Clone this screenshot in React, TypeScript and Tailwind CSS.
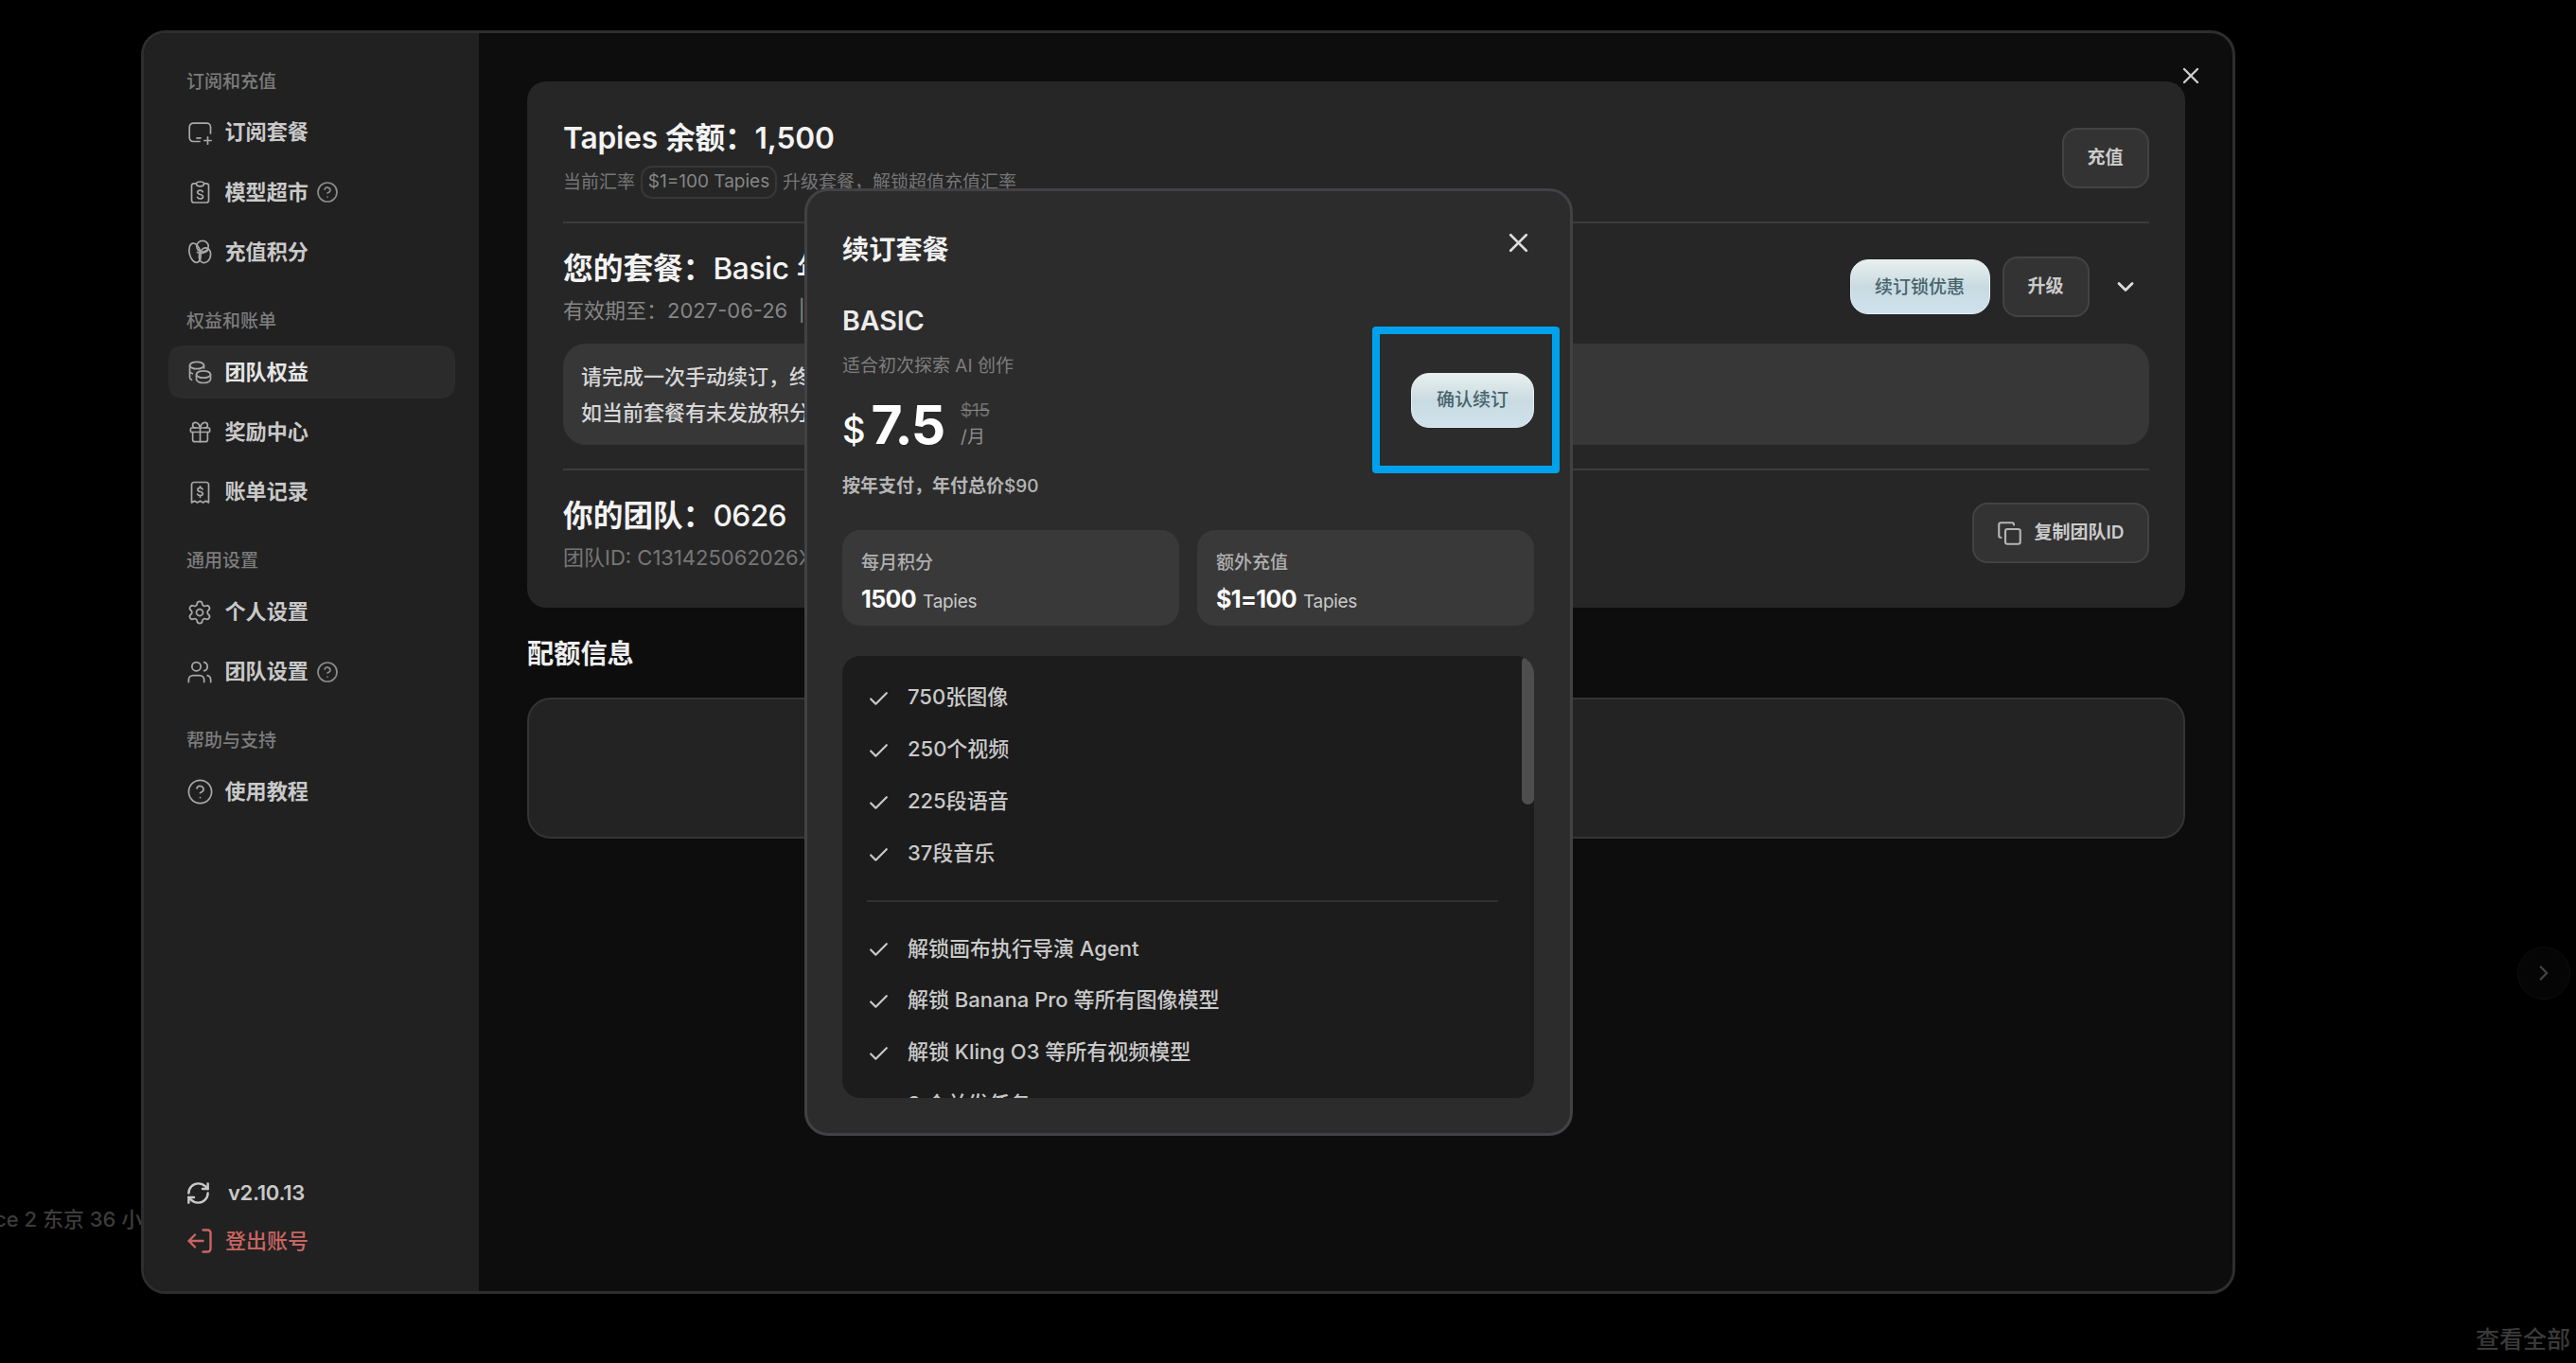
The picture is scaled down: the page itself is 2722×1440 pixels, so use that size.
import type { ReactNode } from "react";
import {
  Check,
  ChevronDown,
  ChevronRight,
  CircleQuestionMark,
  Copy,
  Gift,
  RefreshCw,
  Settings,
  Users,
  X,
} from "lucide-react";

const Svg = (props: { children: ReactNode }) => (
  <svg
    width="25"
    height="25"
    viewBox="0 0 25 25"
    fill="none"
    stroke="currentColor"
    strokeWidth="1.7"
    strokeLinecap="round"
    strokeLinejoin="round"
    className="shrink-0 overflow-visible"
  >
    {props.children}
  </svg>
);

const PlanIcon = () => (
  <Svg>
    <path d="M12 21.5H5.2a4 4 0 0 1-4-4V6.2a4 4 0 0 1 4-4h14.3a4 4 0 0 1 4 4v6.8" />
    <path d="M9 17.8h4M20.5 16.8v7.4M16.8 20.5h7.4" />
  </Svg>
);

const MarketIcon = () => (
  <Svg>
    <path d="M8 2.8H6a2.5 2.5 0 0 0-2.5 2.5v15.2A2.5 2.5 0 0 0 6 23h13a2.5 2.5 0 0 0 2.5-2.5V5.3A2.5 2.5 0 0 0 19 2.8h-2" />
    <path d="M12.5 1c2 0 4 .8 4 2.3S14.5 5.8 12.5 5.8s-4-1-4-2.5S10.5 1 12.5 1Z" />
    <path d="M15.3 11.6c-.4-1-1.5-1.5-2.8-1.5-1.6 0-2.8.8-2.8 2.2 0 3 5.8 1.4 5.8 4.4 0 1.5-1.3 2.3-3 2.3-1.5 0-2.6-.6-3-1.7" />
  </Svg>
);

const CreditIcon = () => (
  <Svg>
    <ellipse cx="7" cy="13.2" rx="5.8" ry="10.4" transform="rotate(-14 7 13.2)" />
    <ellipse cx="15" cy="6.2" rx="6.2" ry="5.8" />
    <ellipse cx="17.5" cy="15.8" rx="6" ry="8" transform="rotate(16 17.5 15.8)" />
    <path d="M9.5 12.5c3 1.800 7.500 1.200 11-2" />
  </Svg>
);

const BenefitIcon = () => (
  <Svg>
    <ellipse cx="9" cy="5" rx="7.5" ry="3.7" />
    <path d="M1.5 5v13c0 1 .8 1.8 2 2.3M1.5 11.5c.4 1 1.5 1.7 3 2.2M16.5 5v3" />
    <ellipse cx="16" cy="14.5" rx="7.5" ry="3.7" />
    <path d="M8.5 14.5v5.3c0 2 3.4 3.7 7.5 3.7s7.5-1.7 7.5-3.7v-5.3" />
  </Svg>
);

const BillIcon = () => (
  <Svg>
    <path d="M3.5 23V4A2.5 2.5 0 0 1 6 1.5h13A2.5 2.5 0 0 1 21.5 4v19l-3-1.8-3 1.8-3-1.8-3 1.8-3-1.8Z" />
    <path d="M15 8.8c-.4-.9-1.3-1.4-2.5-1.4-1.5 0-2.6.8-2.6 2 0 2.8 5.4 1.4 5.4 4.2 0 1.3-1.2 2.1-2.8 2.1-1.4 0-2.4-.6-2.8-1.6M12.5 5.8v1.6M12.5 15.7v1.6" />
  </Svg>
);

const LogoutIcon = () => (
  <svg
    width="26"
    height="26"
    viewBox="0 0 26 26"
    fill="none"
    stroke="currentColor"
    strokeWidth="2.4"
    strokeLinecap="round"
    strokeLinejoin="round"
  >
    <path d="M16.5 1.5h5a3 3 0 0 1 3 3v17a3 3 0 0 1-3 3h-5M16.5 13H1.5M8 6.5 1.5 13 8 19.5" />
  </svg>
);

const NavTitle = (props: { className?: string; children: ReactNode }) => (
  <div
    className={`flex h-[20px] items-center pl-[19.5px] text-[19px] font-medium text-[#7c7c7c] ${props.className ?? ""}`}
  >
    {props.children}
  </div>
);

const NavItem = (props: { icon: ReactNode; label: string; active?: boolean; help?: boolean }) => (
  <div
    className={`flex h-[56px] items-center rounded-[14px] pl-[21px] ${
      props.active ? "bg-[#2b2b2b] text-[#e6e6e6]" : "text-[#c9c9c9]"
    }`}
  >
    <span className="flex w-[39px] text-[#a9a9a9]">{props.icon}</span>
    <span className="text-[22.1px] font-semibold">{props.label}</span>
    {props.help && (
      <CircleQuestionMark size={24} strokeWidth={1.7} className="ml-[8px] text-[#8c8c8c]" />
    )}
  </div>
);

const Sidebar = () => (
  <aside className="flex w-[354px] shrink-0 flex-col bg-[#212121] pr-[25px] pl-[25.5px]">
    <NavTitle className="mt-[42px] mb-[15px]">订阅和充值</NavTitle>
    <div className="flex flex-col gap-[7.4px]">
      <NavItem icon={<PlanIcon />} label="订阅套餐" />
      <NavItem icon={<MarketIcon />} label="模型超市" help />
      <NavItem icon={<CreditIcon />} label="充值积分" />
    </div>
    <NavTitle className="mt-[35px] mb-[15.5px]">权益和账单</NavTitle>
    <div className="flex flex-col gap-[7.4px]">
      <NavItem icon={<BenefitIcon />} label="团队权益" active />
      <NavItem icon={<Gift size={27} strokeWidth={1.5} className="-ml-px" />} label="奖励中心" />
      <NavItem icon={<BillIcon />} label="账单记录" />
    </div>
    <NavTitle className="mt-[35px] mb-[15.5px]">通用设置</NavTitle>
    <div className="flex flex-col gap-[7.4px]">
      <NavItem icon={<Settings size={28} strokeWidth={1.5} className="-ml-[1.5px]" />} label="个人设置" />
      <NavItem icon={<Users size={28} strokeWidth={1.5} className="-ml-[1.5px]" />} label="团队设置" help />
    </div>
    <NavTitle className="mt-[35px] mb-[15.5px]">帮助与支持</NavTitle>
    <NavItem
      icon={<CircleQuestionMark size={29} strokeWidth={1.4} className="-ml-[2px]" />}
      label="使用教程"
    />

    <div className="mt-auto mb-[33px] flex flex-col gap-[11px] pl-[20.5px]">
      <div className="flex h-[40px] items-center text-[#c8c8c8]">
        <RefreshCw size={27} strokeWidth={2.2} className="-ml-[2px]" />
        <span className="ml-[18px] text-[22px] font-semibold tracking-[-0.3px]">v2.10.13</span>
      </div>
      <div className="flex h-[40px] items-center text-[#c96561]">
        <LogoutIcon />
        <span className="ml-[14px] text-[22px] font-medium">登出账号</span>
      </div>
    </div>
  </aside>
);

const GhostButton = (props: { className: string; children: ReactNode }) => (
  <button
    className={`flex h-[64px] items-center justify-center rounded-[16px] border-2 border-[#434343] bg-[#333333] pt-[1px] text-[19px] font-semibold text-[#cbcbcb] ${props.className}`}
  >
    {props.children}
  </button>
);

const GlossButton = (props: { className: string; children: ReactNode }) => (
  <button
    className={`flex h-[58px] items-center justify-center rounded-[19px] border border-[#e3eef0] bg-linear-to-b from-[#e9efee] via-[#c9dbe1] via-50% to-[#cfe2ed] pt-[2px] text-[19px] font-medium text-[#47646b] ${props.className}`}
  >
    {props.children}
  </button>
);

const AccountCard = () => (
  <section className="h-[556px] rounded-[20px] bg-[#262626] px-[38px]">
    <div className="flex h-[150px] items-start justify-between border-b-2 border-[#3b3b3b]">
      <div className="pt-[38px]">
        <h2 className="h-[44px] text-[31.7px] leading-[44px] font-semibold tracking-[-0.15px] whitespace-nowrap text-[#f3f3f3]">
          Tapies 余额：1,500
        </h2>
        <div className="mt-[7px] flex h-[35px] items-center text-[19px] whitespace-nowrap text-[#767676]">
          <span className="pt-[2px]">当前汇率</span>
          <span className="mx-[6px] flex h-[35px] w-[144px] items-center justify-center rounded-[12px] border-2 border-[#373737] text-[#858585]">
            $1=100 Tapies
          </span>
          <span className="pt-[2px]">升级套餐，解锁超值充值汇率</span>
        </div>
      </div>
      <GhostButton className="mt-[49px] w-[92px]">充值</GhostButton>
    </div>

    <div className="h-[261px] border-b-2 border-[#3b3b3b]">
      <div className="flex h-[127px] justify-between">
        <div className="pt-[26px] whitespace-nowrap">
          <h2 className="h-[44px] text-[31.7px] leading-[44px] font-semibold text-[#f3f3f3]">
            您的套餐：<span className="font-medium tracking-[-0.4px]">Basic 年付</span>
          </h2>
          <p className="mt-[7px] text-[22px] leading-[30px] text-[#858585]">
            有效期至：2027-06-26 <span className="ml-[5px]">|</span>
          </p>
        </div>
        <div className="mt-[35px] flex h-[64px] items-center">
          <GlossButton className="w-[148px]">续订锁优惠</GlossButton>
          <GhostButton className="ml-[13px] w-[92px]">升级</GhostButton>
          <ChevronDown size={28} strokeWidth={2.4} className="mr-[11px] ml-[24px] text-[#dcdcdc]" />
        </div>
      </div>
      <div className="h-[107px] rounded-[24px] bg-[#373737] px-[19px] pt-[17px] text-[22px] leading-[37.5px] font-medium text-[#d6d6d6]">
        <p>请完成一次手动续订，终身</p>
        <p>如当前套餐有未发放积分</p>
      </div>
    </div>

    <div className="flex justify-between">
      <div className="pt-[26px] whitespace-nowrap">
        <h2 className="h-[44px] text-[31.7px] leading-[44px] font-semibold text-[#f3f3f3]">
          你的团队：<span className="font-medium tracking-[-0.6px]">0626</span>
        </h2>
        <p className="mt-[7px] text-[22px] leading-[30px] text-[#767676]">团队ID: C131425062026X</p>
      </div>
      <GhostButton className="mt-[34px] w-[187px]">
        <Copy size={27} strokeWidth={1.9} className="mr-[13px] text-[#b5b5b5]" />
        复制团队ID
      </GhostButton>
    </div>
  </section>
);

const StatCard = (props: { label: string; value: string }) => (
  <div className="h-[101px] rounded-[19px] bg-[#393939] px-[20px] pt-[21px]">
    <p className="text-[19px] leading-[28px] font-medium text-[#b0b0b0]">{props.label}</p>
    <p className="mt-[4px] text-[25px] leading-[40px] font-bold tracking-[-0.6px] text-white">
      {props.value}
      <span className="ml-[7px] text-[19px] font-normal tracking-[-0.3px] text-[#c9c9c9]">Tapies</span>
    </p>
  </div>
);

const FeatureRow = (props: { text: string }) => (
  <li className="flex h-[54.9px] shrink-0 items-center text-[22px] font-medium whitespace-nowrap text-[#c9c9c9]">
    <Check size={25} strokeWidth={2.1} className="mt-[3px] mr-[18px]" />
    {props.text}
  </li>
);

const quotas = ["750张图像", "250个视频", "225段语音", "37段音乐"];
const features = [
  "解锁画布执行导演 Agent",
  "解锁 Banana Pro 等所有图像模型",
  "解锁 Kling O3 等所有视频模型",
  "3 个并发任务",
];

const RenewDialog = () => (
  <div className="absolute top-[199px] left-[849.5px] flex h-[1001px] w-[812px] flex-col rounded-[25px] border-3 border-[#424246] bg-[#2c2c2c] px-[37.5px]">
    <div className="mt-[39px] flex h-[46px] items-center justify-between">
      <h2 className="text-[28.2px] font-semibold text-[#f0f0f0]">续订套餐</h2>
      <X size={33} strokeWidth={1.9} className="mb-[15px] text-[#dedede]" />
    </div>

    <div className="mt-[34px] flex h-[239px] justify-between">
      <div className="whitespace-nowrap">
        <h3 className="text-[28.5px] leading-[36px] font-semibold text-[#ececec]">BASIC</h3>
        <p className="mt-[15px] text-[19px] leading-[30px] text-[#7e7e7e]">适合初次探索 AI 创作</p>
        <div className="mt-[15px] flex h-[62px] items-center text-white">
          <span className="mt-[12px] text-[38px] leading-none font-medium">$</span>
          <span className="ml-[6px] text-[57px] leading-none font-bold tracking-[-1.2px]">7.5</span>
          <span className="ml-[17px] flex flex-col text-[19px] leading-[28px] text-[#8f8f8f]">
            <s className="tracking-[-0.3px] text-[#707070] decoration-[#8a8a8a]">$15</s>
            <span>/月</span>
          </span>
        </div>
        <p className="mt-[20px] text-[19px] leading-[30px] font-semibold text-[#b5b5b5]">
          按年支付，年付总价<span className="font-medium">$90</span>
        </p>
      </div>
      {/* highlighted call to action */}
      <div className="mt-[24px] mr-[-27px] flex h-[155px] w-[198px] items-center justify-end rounded-[4px] border-8 border-[#00a2ed] pr-[19px]">
        <GlossButton className="w-[130px]">确认续订</GlossButton>
      </div>
    </div>

    <div className="grid grid-cols-2 gap-[19px]">
      <StatCard label="每月积分" value="1500" />
      <StatCard label="额外充值" value="$1=100" />
    </div>

    <div className="mt-[31.5px] flex h-[467px] justify-between overflow-hidden rounded-[19px] bg-[#1c1c1c]">
      <div className="ml-[26px] w-[667px] pt-[17px]">
        <ul className="border-b-2 border-[#303030] pb-[22px]">
          {quotas.map((text) => (
            <FeatureRow key={text} text={text} />
          ))}
        </ul>
        <ul className="pt-[21.5px]">
          {features.map((text) => (
            <FeatureRow key={text} text={text} />
          ))}
        </ul>
      </div>
      <div className="h-[157px] w-[13px] rounded-full bg-[#4e4e4e]" />
    </div>
  </div>
);

const App = () => (
  <div className="relative h-[1440px] w-[2722px] overflow-hidden bg-black font-['Inter','Noto_Sans_CJK_SC',sans-serif]">
    {/* dimmed page under the dialogs */}
    <div className="absolute top-[1273px] right-[2559px] text-[22px] leading-[30px] font-medium whitespace-nowrap text-[#3c3c3c]">
      Seedance 2 东京 36 小v
    </div>
    <div className="absolute top-[1000px] left-[2660px] flex size-[56px] items-center justify-center rounded-full border border-[#0e0e0e] bg-[#050505]">
      <ChevronRight size={26} strokeWidth={2.2} className="text-[#444444]" />
    </div>
    <div className="absolute top-[1397px] left-[2616px] text-[25px] leading-[36px] font-medium whitespace-nowrap text-[#3a3a3a]">
      查看全部
    </div>

    <div className="relative mt-[32px] ml-[149px] flex h-[1335px] w-[2213px] overflow-hidden rounded-[26px] border-3 border-[#2e2e2e] bg-[#0d0d0d]">
      <Sidebar />
      <main className="flex-1 pt-[51px] pr-[50.5px] pl-[51px]">
        <AccountCard />
        <h2 className="mt-[28.5px] h-[40px] text-[28.2px] leading-[40px] font-semibold text-[#efefef]">
          配额信息
        </h2>
        <div className="mt-[26.5px] h-[149px] rounded-[25px] border-2 border-[#343434] bg-[#232323]" />
      </main>
      <X size={28} strokeWidth={2.1} className="absolute top-[30.5px] right-[30px] text-[#cccccc]" />
    </div>

    <RenewDialog />
  </div>
);

export default App;
